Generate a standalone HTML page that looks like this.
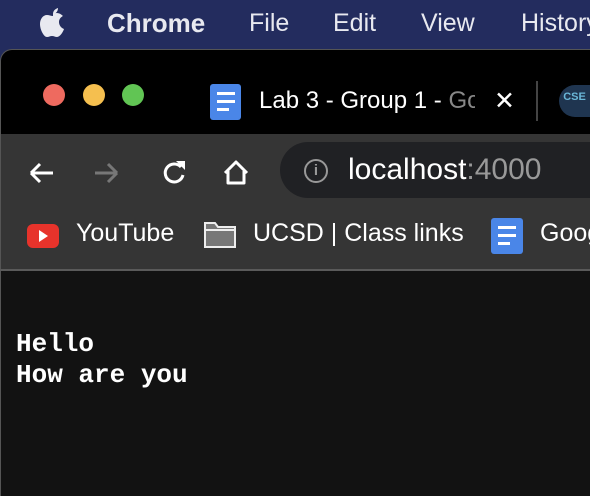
<!DOCTYPE html>
<html style="overflow:hidden;width:590px;height:496px"><head><style>
body{margin:0;width:590px;height:496px;overflow:hidden;background:#232c5c;font-family:"Liberation Sans",sans-serif;position:relative}
.abs{position:absolute}
.menu{top:8px;font-size:25px;color:#e8e9f0;line-height:30px}
</style></head><body>
<div class="abs" style="left:0;top:0;width:590px;height:50px;background:#232c5e"></div>
<svg class="abs" style="left:36px;top:5px" width="34" height="36" viewBox="0 0 34 36"><path d="M22 3c-3 1-5 3-5 6 3 0 5-3 5-6zM17 11c-2 0-4-1-6-1-4 0-7 4-7 9 0 6 4 13 7 13 2 0 3-1 5-1s3 1 5 1c3 0 6-5 7-8-3-1-5-4-5-7 0-3 2-5 4-6-2-2-4-3-6-3-2 0-3 1-4 1z" fill="#e8e9f0"/></svg>
<div class="abs menu" style="left:107px;font-weight:bold;font-size:26px">Chrome</div>
<div class="abs menu" style="left:249px">File</div>
<div class="abs menu" style="left:333px">Edit</div>
<div class="abs menu" style="left:421px">View</div>
<div class="abs menu" style="left:521px;width:69px;overflow:hidden;white-space:nowrap">History</div>
<div class="abs" style="left:0;top:49px;width:589px;height:447px;background:#000;border-top-left-radius:12px;border:1px solid #555;border-right:none;border-bottom:none"></div>
<div class="abs" style="left:43px;top:84px;width:22px;height:22px;border-radius:50%;background:#ee6a5f"></div>
<div class="abs" style="left:83px;top:84px;width:22px;height:22px;border-radius:50%;background:#f5bf4f"></div>
<div class="abs" style="left:122px;top:84px;width:22px;height:22px;border-radius:50%;background:#61c554"></div>
<div class="abs" style="left:210px;top:84px;width:31px;height:36px;background:#4a86e8;border-radius:3px"></div>
<div class="abs" style="left:217px;top:92px;width:18px;height:3px;background:#fff"></div>
<div class="abs" style="left:217px;top:100px;width:18px;height:3px;background:#fff"></div>
<div class="abs" style="left:217px;top:108px;width:12px;height:3px;background:#fff"></div>
<div class="abs" style="left:259px;top:87px;width:216px;overflow:hidden;font-size:24px;color:#fff;white-space:nowrap">Lab 3 - Group 1 - <span style="color:#888">Go</span></div>
<div class="abs" style="left:494px;top:86px;font-size:25px;color:#fff">✕</div>
<div class="abs" style="left:536px;top:81px;width:2px;height:40px;background:#444"></div>
<div class="abs" style="left:559px;top:85px;width:31px;height:32px;overflow:hidden;border-radius:16px 0 0 16px;background:#1f3550;color:#6ab7d8;font-size:11px;font-weight:bold;line-height:24px;text-align:center">CSE</div>
<div class="abs" style="left:1px;top:134px;width:589px;height:136px;background:#353535"></div>
<div class="abs" style="left:0;top:269px;width:590px;height:2px;background:#5a5a5a"></div>
<div class="abs" style="left:1px;top:271px;width:589px;height:225px;background:#121212"></div>
<svg class="abs" style="left:25px;top:157px" width="230" height="32" viewBox="0 0 230 32">
<path d="M6 16h22M6 16l9-9M6 16l9 9" stroke="#fff" stroke-width="3" fill="none"/>
<path d="M70 16h22M92 16l-9-9M92 16l-9 9" stroke="#777" stroke-width="3" fill="none"/>
<path d="M156 10a9 9 0 1 0 2 8" stroke="#fff" stroke-width="3" fill="none"/><path d="M151 4l9 0 0 9z" fill="#fff"/>
<path d="M200 16l11-11 11 11M203 14v12h16v-12" stroke="#fff" stroke-width="3" fill="none" stroke-linejoin="round"/>
</svg>
<div class="abs" style="left:280px;top:142px;width:310px;height:56px;border-radius:28px 0 0 28px;background:#202124"></div>
<div class="abs" style="left:304px;top:159px;width:20px;height:20px;border-radius:50%;border:2.5px solid #999;color:#999;font-size:15px;font-weight:bold;text-align:center;line-height:20px">i</div>
<div class="abs" style="left:348px;top:153px;font-size:30px;color:#fff">localhost<span style="color:#999">:4000</span></div>
<div class="abs" style="left:27px;top:224px;width:32px;height:24px;border-radius:6px;background:#e7332b"></div>
<svg class="abs" style="left:39px;top:230px" width="10" height="12"><path d="M0 0l9 6-9 6z" fill="#fff"/></svg>
<div class="abs" style="left:76px;top:219px;font-size:25px;color:#fff">YouTube</div>
<svg class="abs" style="left:203px;top:220px" width="34" height="30"><path d="M2 3h10l3 4h17v20H2z" fill="#777" stroke="#eee" stroke-width="2"/><path d="M2 10h30" stroke="#eee" stroke-width="2"/></svg>
<div class="abs" style="left:253px;top:219px;font-size:25px;color:#fff">UCSD | Class links</div>
<div class="abs" style="left:491px;top:218px;width:32px;height:36px;background:#4a86e8;border-radius:3px"></div>
<div class="abs" style="left:498px;top:226px;width:18px;height:3px;background:#fff"></div>
<div class="abs" style="left:498px;top:234px;width:18px;height:3px;background:#fff"></div>
<div class="abs" style="left:498px;top:242px;width:12px;height:3px;background:#fff"></div>
<div class="abs" style="left:540px;top:219px;width:50px;overflow:hidden;white-space:nowrap;font-size:25px;color:#fff">Google</div>
<div class="abs" style="left:16px;top:329px;font-family:'Liberation Mono',monospace;font-size:26px;line-height:31px;color:#fff;font-weight:bold">Hello<br>How are you</div>
</body></html>
